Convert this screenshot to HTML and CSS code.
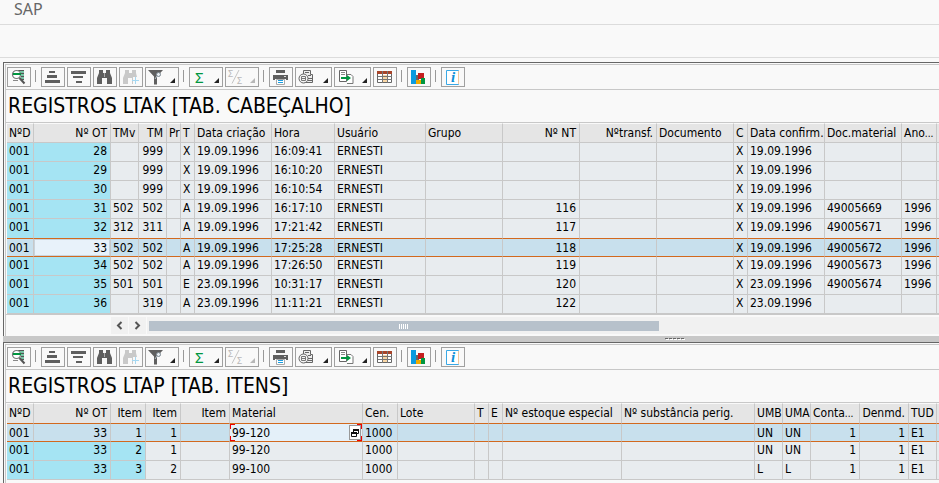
FILE: index.html
```html
<!DOCTYPE html>
<html lang="pt-BR">
<head>
<meta charset="utf-8">
<title>SAP</title>
<link rel="stylesheet" href="styles.css">
</head>
<body>
<svg class="sprite" aria-hidden="true">
  <symbol id="i-detail" viewBox="0 0 22 18">
    <path d="M11 2h5v11h-4" fill="#d5e9e4"/>
    <path d="M10 2.500h6M13 5.500h3M13 8.500h3M13 11.500h3" stroke="#555" fill="none"/>
    <path d="M12 4h4M13 7h3M13 10h3" stroke="#18a068" fill="none"/>
    <circle cx="8.500" cy="6.500" r="4" fill="#fff" stroke="#777" stroke-width="1.200"/>
    <path d="M5 6h8" stroke="#009640" stroke-width="2"/>
    <path d="M5 12.500h5" stroke="#888"/>
    <path d="M11.500 10l5 5.500" stroke="#555" stroke-width="2"/>
  </symbol>
  <symbol id="i-asc" viewBox="0 0 22 18"><path d="M7 3h6v2H7zM5 7h10v3H5zM3 12h15v3H3z" fill="#5f5f5f"/></symbol>
  <symbol id="i-desc" viewBox="0 0 22 18"><path d="M3 3h15v3H3zM5 8h10v2H5zM8 13h6v2H8z" fill="#5f5f5f"/></symbol>
  <symbol id="i-find" viewBox="0 0 22 18"><path d="M5 2h4v3h3V2h4v3l2 5v6h-5v-6h-5v6H3v-6l2-5z" fill="#5f5f5f"/><path d="M10.500 5v4" stroke="#aaa"/></symbol>
  <symbol id="i-next" viewBox="0 0 22 18"><path d="M5 2h4v3h3V2h4v3l1 4h-4v7h-1v-6H8v6H3v-6l2-5z" fill="#c9c9c9"/><path d="M12 12.500h7M15.500 9v7" stroke="#a5d8f2" fill="none"/></symbol>
  <symbol id="i-filter" viewBox="0 0 22 18"><path d="M2 2h15l-6 6.500v8H8v-8z" fill="#5f5f5f"/><circle cx="12.500" cy="6.500" r="2" fill="#e8eef2" stroke="#7b8790"/><path d="M11 8l-2 3" stroke="#b8c4cc"/></symbol>
  <symbol id="i-slash" viewBox="0 0 22 18"><path d="M6 15.500L13 2" stroke="#c4c4c4"/></symbol>
  <symbol id="i-print" viewBox="0 0 22 18"><path d="M6 2h9v3H6z" fill="#5f5f5f"/><path d="M3 7h15v5h-2v-1H5v1H3z" fill="#5f5f5f"/><path d="M14 8.500h2" stroke="#ddd"/><path d="M6.500 11.500h8v5h-8z" fill="#fff" stroke="#aaa"/><path d="M8 12.500h5M8 14.500h5" stroke="#1b9de0"/></symbol>
  <symbol id="i-view" viewBox="0 0 22 18"><path d="M7.500 2.500h7v4h2v8h-9z" fill="#eee" stroke="#666"/><path d="M9 4.500h4M12 7.500h3M12 10.500h4M12 12.500h4" stroke="#666"/><circle cx="7.500" cy="10.500" r="4.500" fill="#f4f4f4" stroke="#666"/><path d="M5.500 8.500h4v4h-4zM5 10.500h5" fill="none" stroke="#777"/></symbol>
  <symbol id="i-export" viewBox="0 0 22 18"><path d="M4.500 2.500h7v11h-7z" fill="#fff" stroke="#666"/><path d="M6 4.500h4M6 6.500h4" stroke="#888"/><path d="M12 6.500h4l2 2v7h-6" fill="#fff" stroke="#777"/><path d="M6 9h6V7l4 3-4 3v-2H6z" fill="#009640"/></symbol>
  <symbol id="i-layout" viewBox="0 0 22 18"><path d="M3.500 3.500h14v11h-14z" fill="#fff" stroke="#666"/><path d="M3 3h15v3H3z" fill="#a8452a"/><path d="M9 7h4v7H9z" fill="#fbd7a5"/><path d="M4 8.500h14M4 11.500h14M8.500 3v12M13.500 3v12" stroke="#777"/></symbol>
  <symbol id="i-chart" viewBox="0 0 22 18"><path d="M3 2h5v14H3z" fill="#0a9be0"/><path d="M8 7h3v5H8z" fill="#666"/><path d="M10 5h6v6h-6z" fill="#c41e1e"/><path d="M8 12h5v4H8z" fill="#f0ab00"/><path d="M13 10h4v6h-4z" fill="#009640"/></symbol>
  <symbol id="i-page" viewBox="0 0 22 18"><path d="M4.500 2.500h12v14h-12z" fill="#fff" stroke="#3aa9e6"/><path d="M16.500 3v13" stroke="#f0c9a0"/></symbol>
</svg>

<header class="title-bar">SAP</header>
<div class="command-bar"></div>

<main class="panes">
  <section class="pane">
    <div class="toolbar">
      <button aria-label="Detalhes"><svg><use href="#i-detail"/></svg></button>
      <i></i>
      <button aria-label="Ordem crescente"><svg><use href="#i-asc"/></svg></button>
      <button aria-label="Ordem decrescente"><svg><use href="#i-desc"/></svg></button>
      <button aria-label="Procurar"><svg><use href="#i-find"/></svg></button>
      <button aria-label="Continuar procura" disabled><svg><use href="#i-next"/></svg></button>
      <button class="menu" aria-label="Filtro"><svg><use href="#i-filter"/></svg></button>
      <i></i>
      <button class="menu" aria-label="Total"><span class="sigma">Σ</span></button>
      <button class="menu" aria-label="Subtotal" disabled><svg><use href="#i-slash"/></svg><span class="upper">Σ</span><span class="lower">Σ</span></button>
      <i></i>
      <button aria-label="Imprimir"><svg><use href="#i-print"/></svg></button>
      <button class="menu wide" aria-label="Visões"><svg><use href="#i-view"/></svg></button>
      <button class="menu wide" aria-label="Exportar"><svg><use href="#i-export"/></svg></button>
      <button aria-label="Layout"><svg><use href="#i-layout"/></svg></button>
      <i></i>
      <button aria-label="Gráfico"><svg><use href="#i-chart"/></svg></button>
      <i></i>
      <button aria-label="Informação"><svg><use href="#i-page"/></svg><span class="info">i</span></button>
    </div>
    <h1>REGISTROS LTAK [TAB. CABEÇALHO]</h1>
    <table class="headers">
      <colgroup><col class="w27"><col class="w77"><col class="w28"><col class="w28"><col class="w14"><col class="w14"><col class="w77"><col class="w63"><col class="w91"><col class="w77"><col class="w77"><col class="w77"><col class="w77"><col class="w14"><col class="w77"><col class="w77"><col class="w35"><col></colgroup>
      <thead><tr><th>NºD</th><th>Nº OT</th><th>TMv</th><th>TM</th><th>Pr</th><th>T</th><th>Data criação</th><th>Hora</th><th>Usuário</th><th>Grupo</th><th>Nº NT</th><th>Nºtransf.</th><th>Documento</th><th>C</th><th>Data confirm.</th><th>Doc.material</th><th>Ano<small>...</small></th><th></th></tr></thead>
      <tbody>
        <tr><td>001</td><td>28</td><td></td><td>999</td><td></td><td>X</td><td>19.09.1996</td><td>16:09:41</td><td>ERNESTI</td><td></td><td></td><td></td><td></td><td>X</td><td>19.09.1996</td><td></td><td></td><td></td></tr>
        <tr><td>001</td><td>29</td><td></td><td>999</td><td></td><td>X</td><td>19.09.1996</td><td>16:10:20</td><td>ERNESTI</td><td></td><td></td><td></td><td></td><td>X</td><td>19.09.1996</td><td></td><td></td><td></td></tr>
        <tr><td>001</td><td>30</td><td></td><td>999</td><td></td><td>X</td><td>19.09.1996</td><td>16:10:54</td><td>ERNESTI</td><td></td><td></td><td></td><td></td><td>X</td><td>19.09.1996</td><td></td><td></td><td></td></tr>
        <tr><td>001</td><td>31</td><td>502</td><td>502</td><td></td><td>A</td><td>19.09.1996</td><td>16:17:10</td><td>ERNESTI</td><td></td><td>116</td><td></td><td></td><td>X</td><td>19.09.1996</td><td>49005669</td><td>1996</td><td></td></tr>
        <tr class="before-selected"><td>001</td><td>32</td><td>312</td><td>311</td><td></td><td>A</td><td>19.09.1996</td><td>17:21:42</td><td>ERNESTI</td><td></td><td>117</td><td></td><td></td><td>X</td><td>19.09.1996</td><td>49005671</td><td>1996</td><td></td></tr>
        <tr class="selected"><td>001</td><td class="current">33</td><td>502</td><td>502</td><td></td><td>A</td><td>19.09.1996</td><td>17:25:28</td><td>ERNESTI</td><td></td><td>118</td><td></td><td></td><td>X</td><td>19.09.1996</td><td>49005672</td><td>1996</td><td></td></tr>
        <tr><td>001</td><td>34</td><td>502</td><td>502</td><td></td><td>A</td><td>19.09.1996</td><td>17:26:50</td><td>ERNESTI</td><td></td><td>119</td><td></td><td></td><td>X</td><td>19.09.1996</td><td>49005673</td><td>1996</td><td></td></tr>
        <tr><td>001</td><td>35</td><td>501</td><td>501</td><td></td><td>E</td><td>23.09.1996</td><td>10:31:17</td><td>ERNESTI</td><td></td><td>120</td><td></td><td></td><td>X</td><td>23.09.1996</td><td>49005674</td><td>1996</td><td></td></tr>
        <tr><td>001</td><td>36</td><td></td><td>319</td><td></td><td>A</td><td>23.09.1996</td><td>11:11:21</td><td>ERNESTI</td><td></td><td>122</td><td></td><td></td><td>X</td><td>23.09.1996</td><td></td><td></td><td></td></tr>
      </tbody>
    </table>
    <div class="scrollbar">
      <button aria-label="Rolar para a esquerda"><svg viewBox="0 0 17 17"><path d="M10.500 5L7 8.500l3.500 3.500"/></svg></button>
      <button aria-label="Rolar para a direita"><svg viewBox="0 0 17 17"><path d="M6.500 5L10 8.500 6.500 12"/></svg></button>
      <div class="track"><div class="thumb"><svg viewBox="0 0 9 5"><path d="M.5 0v5M2.500 0v5M4.500 0v5M6.500 0v5M8.500 0v5"/></svg></div></div>
    </div>
  </section>
  <div class="splitter"><svg viewBox="0 0 20 3"><path d="M1 1.500h19" stroke="#fff"/><path d="M0 .5h19" stroke="#666"/></svg></div>

  <section class="pane">
    <div class="toolbar">
      <button aria-label="Detalhes"><svg><use href="#i-detail"/></svg></button>
      <i></i>
      <button aria-label="Ordem crescente"><svg><use href="#i-asc"/></svg></button>
      <button aria-label="Ordem decrescente"><svg><use href="#i-desc"/></svg></button>
      <button aria-label="Procurar"><svg><use href="#i-find"/></svg></button>
      <button aria-label="Continuar procura" disabled><svg><use href="#i-next"/></svg></button>
      <button class="menu" aria-label="Filtro"><svg><use href="#i-filter"/></svg></button>
      <i></i>
      <button class="menu" aria-label="Total"><span class="sigma">Σ</span></button>
      <button class="menu" aria-label="Subtotal" disabled><svg><use href="#i-slash"/></svg><span class="upper">Σ</span><span class="lower">Σ</span></button>
      <i></i>
      <button aria-label="Imprimir"><svg><use href="#i-print"/></svg></button>
      <button class="menu wide" aria-label="Visões"><svg><use href="#i-view"/></svg></button>
      <button class="menu wide" aria-label="Exportar"><svg><use href="#i-export"/></svg></button>
      <button aria-label="Layout"><svg><use href="#i-layout"/></svg></button>
      <i></i>
      <button aria-label="Gráfico"><svg><use href="#i-chart"/></svg></button>
      <i></i>
      <button aria-label="Informação"><svg><use href="#i-page"/></svg><span class="info">i</span></button>
    </div>
    <h1>REGISTROS LTAP [TAB. ITENS]</h1>
    <table class="items">
      <colgroup><col class="w27"><col class="w77"><col class="w35"><col class="w35"><col class="w49"><col class="w133"><col class="w35"><col class="w77"><col class="w14"><col class="w14"><col class="w119"><col class="w133"><col class="w28"><col class="w28"><col class="w49"><col class="w49"><col class="w28"><col></colgroup>
      <thead><tr class="before-selected"><th>NºD</th><th>Nº OT</th><th>Item</th><th>Item</th><th>Item</th><th>Material</th><th>Cen.</th><th>Lote</th><th>T</th><th>E</th><th>Nº estoque especial</th><th>Nº substância perig.</th><th>UMB</th><th>UMA</th><th>Conta<small>...</small></th><th>Denmd.</th><th>TUD</th><th></th></tr></thead>
      <tbody>
        <tr class="selected"><td>001</td><td>33</td><td>1</td><td>1</td><td></td><td class="edit"><div class="field"><input aria-label="Material" value="99-120"><button aria-label="Opções de entrada"><svg viewBox="0 0 10 13"><path d="M3.500 3.500h5v4h-5z"/><path d="M1.500 6.500h5v4h-5z" class="front"/><path d="M3 4h6M1 7h6" class="bar"/></svg></button></div></td><td>1000</td><td></td><td></td><td></td><td></td><td></td><td>UN</td><td>UN</td><td>1</td><td>1</td><td>E1</td><td></td></tr>
        <tr><td>001</td><td>33</td><td>2</td><td>1</td><td></td><td>99-120</td><td>1000</td><td></td><td></td><td></td><td></td><td></td><td>UN</td><td>UN</td><td>1</td><td>1</td><td>E1</td><td></td></tr>
        <tr><td>001</td><td>33</td><td>3</td><td>2</td><td></td><td>99-100</td><td>1000</td><td></td><td></td><td></td><td></td><td></td><td>L</td><td>L</td><td>1</td><td>1</td><td>E1</td><td></td></tr>
      </tbody>
    </table>
    <div class="rest"></div>
  </section>
</main>
</body>
</html>
```
FILE: styles.css
```css
* { box-sizing: border-box; }

body {
  display: flex;
  flex-direction: column;
  min-height: 100vh;
  margin: 0;
  background: #f9f9f9;
  color: #000;
  font: 12px/16px "DejaVu Sans Condensed", "DejaVu Sans", sans-serif;
}

button, input { font: inherit; color: inherit; }
button { padding: 0; }
svg { display: block; }

.sprite { position: absolute; width: 0; height: 0; }

.title-bar {
  height: 25px;
  padding-left: 14px;
  border-bottom: 1px solid #dcdcdc;
  color: #666;
  font: 16px/18px "Noto Sans", sans-serif;
}

.command-bar {
  height: 33px;
  border-bottom: 1px solid #dcdcdc;
}

.panes {
  flex: 1;
  display: flex;
  flex-direction: column;
  padding: 4px 0 0 3px;
}

.pane {
  display: flex;
  flex-direction: column;
  border-top: 1px solid #666;
  border-left: 1px solid #666;
  padding: 1px 0 0 1px;
}

.pane:last-child { flex: 1; }

.rest { flex: 1; border-left: 1px solid #c8c8c8; }

.toolbar {
  display: flex;
  gap: 2px;
  padding: 2px 0 2px 1px;
  border-top: 1px solid #c8c8c8;
  border-left: 1px solid #c8c8c8;
  border-bottom: 1px solid #c8c8c8;
}

.toolbar button {
  position: relative;
  width: 24px;
  height: 20px;
  border: 1px solid #a0a0a0;
  background: #f9f9f9;
}

.toolbar button svg { width: 22px; height: 18px; }
.toolbar .menu { width: 34px; }
.toolbar .wide { width: 37px; }

.toolbar .menu::after {
  content: "";
  position: absolute;
  right: 3px;
  bottom: 3px;
  border-bottom: 5px solid #222;
  border-left: 5px solid transparent;
}

.toolbar .menu:disabled::after { border-bottom-color: #b8b8b8; }

.toolbar i {
  width: 1px;
  height: 12px;
  margin: 3px 3px 0 2px;
  background: #999;
}

.toolbar span { position: absolute; }
.sigma { left: 5px; top: 0; color: #009640; font: 15px/18px "Noto Sans", sans-serif; }
.upper, .lower { color: #b8b8b8; font: 9px/9px "Noto Sans", sans-serif; }
.upper { left: 2px; top: 1px; }
.lower { left: 11px; top: 8px; }
.info { left: 9px; top: 0; color: #0a8fd8; font: italic bold 15px/18px "Liberation Serif", serif; }

h1 {
  margin: 0;
  padding: 1px 0 0 2px;
  height: 33px;
  border-left: 1px solid #c8c8c8;
  border-bottom: 1px solid #c8c8c8;
  font-size: 21px;
  font-weight: normal;
  line-height: 30px;
}

table {
  width: 100%;
  table-layout: fixed;
  border-collapse: separate;
  border-spacing: 0;
  border-left: 1px solid #c8c8c8;
  padding-left: 1px;
}

.w14 { width: 14px; }
.w27 { width: 27px; }
.w28 { width: 28px; }
.w35 { width: 35px; }
.w49 { width: 49px; }
.w63 { width: 63px; }
.w77 { width: 77px; }
.w91 { width: 91px; }
.w119 { width: 119px; }
.w133 { width: 133px; }

th, td {
  height: 19px;
  padding: 0 3px 2px 2px;
  border-right: 1px solid #c8c8c8;
  border-bottom: 1px solid #c8c8c8;
  background: #e8ecef;
  font-weight: normal;
  text-align: left;
  white-space: nowrap;
  overflow: hidden;
}

th {
  height: 20px;
  padding: 0 0 0 2px;
  border-top: 1px solid #f9f9f9;
  background: #e5e5e5;
}

th:last-child, td:last-child { padding: 0; border-right: 0; }
th small { font-size: 10px; line-height: 10px; }

.headers :is(th, td):is(:nth-child(2), :nth-child(4), :nth-child(11), :nth-child(12)),
.items :is(th, td):is(:nth-child(2), :nth-child(3), :nth-child(4), :nth-child(5), :nth-child(16)),
.items td:nth-child(15) {
  text-align: right;
  padding-right: 3px;
}

td:nth-child(-n+2), .items td:nth-child(3) { background: #a5e4f3; }

.before-selected > td { height: 20px; padding-bottom: 3px; border-bottom: 1px solid #d2691e; }
.before-selected > th { height: 21px; padding-bottom: 1px; border-bottom: 1px solid #d2691e; }
.selected > td { height: 18px; padding-bottom: 0; border-bottom: 1px solid #d2691e; }
table .selected td:nth-child(n) { background: #c8e0ed; }
table .selected td.current:nth-child(n) { background: #e8f2fa; box-shadow: inset 0 0 0 1px #c8d4dc; }

table .selected td.edit:nth-child(n) {
  padding: 0;
  background: #e4f0f9;
}

.field {
  --red: linear-gradient(#e00, #e00);
  display: flex;
  align-items: center;
  height: 17px;
  padding: 0 1px;
  background:
    var(--red) 0 0 / 1px 5px, var(--red) 100% 0 / 1px 5px,
    var(--red) 0 100% / 1px 5px, var(--red) 100% 100% / 1px 5px,
    var(--red) 0 0 / 5px 1px, var(--red) 100% 0 / 5px 1px,
    var(--red) 0 100% / 5px 1px, var(--red) 100% 100% / 5px 1px;
  background-repeat: no-repeat;
}

.field input {
  flex: 1;
  min-width: 0;
  height: 16px;
  padding: 0 1px;
  border: 0;
  background: transparent;
}

.field button {
  width: 12px;
  height: 15px;
  border: 1px solid #999;
  background: #fff;
}

.field path { fill: none; stroke: #111; }
.field .front { fill: #fff; }
.field .bar { stroke-width: 2; }

.scrollbar {
  display: flex;
  gap: 1px;
  height: 22px;
  padding: 2px 0 2px 105px;
  border-left: 1px solid #c8c8c8;
  border-top: 1px solid #c8c8c8;
}

.scrollbar button {
  width: 17px;
  height: 17px;
  border: 0;
  background: #f1f1f1;
}

.scrollbar button path { fill: none; stroke: #555; stroke-width: 2; }

.track {
  flex: 1;
  height: 17px;
  padding: 4px 0 0 2px;
  background: #f1f1f1;
}

.thumb {
  display: flex;
  align-items: center;
  justify-content: center;
  width: 64.5%;
  height: 10px;
  background: #b7c1cb;
}

.thumb svg { width: 9px; height: 5px; }
.thumb path { stroke: #fff; }

.splitter {
  display: flex;
  height: 6px;
  padding-top: 2px;
  justify-content: center;
  background: #c8c8c8;
}

.splitter svg { width: 20px; height: 3px; margin-left: 408px; }
.splitter path { stroke-dasharray: 3 1; }
```
